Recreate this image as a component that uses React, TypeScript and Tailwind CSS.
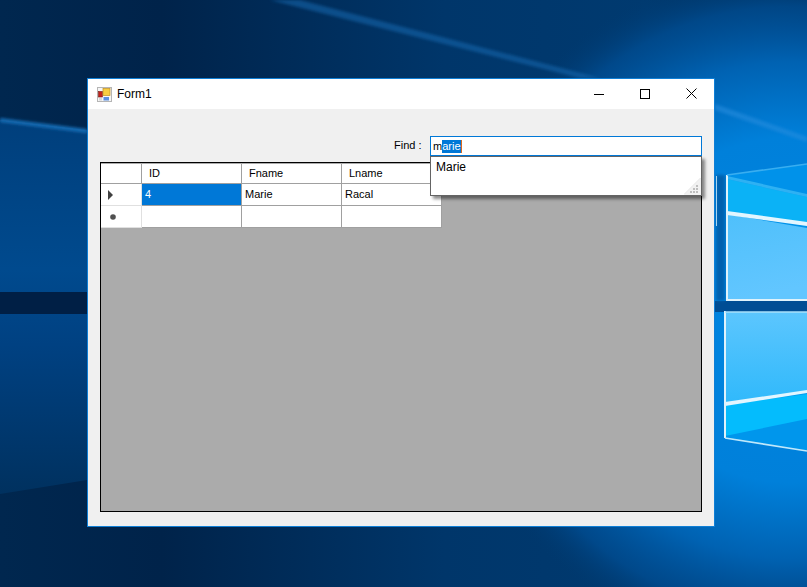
const ui = { fontFamily: '"Liberation Sans", Arial, sans-serif' };

function Wallpaper() {
  return (
    <svg className="absolute inset-0 w-full h-full" viewBox="0 0 807 587" preserveAspectRatio="none">
      <defs>
        <linearGradient id="base" x1="0" y1="0" x2="1" y2="0">
          <stop offset="0" stopColor="#00274f" />
          <stop offset="0.2" stopColor="#00234a" />
          <stop offset="0.55" stopColor="#00366a" />
          <stop offset="0.8" stopColor="#003a70" />
          <stop offset="1" stopColor="#00305e" />
        </linearGradient>
        <radialGradient id="glow" gradientUnits="userSpaceOnUse" cx="790" cy="310" r="345">
          <stop offset="0" stopColor="#0086e2" />
          <stop offset="0.5" stopColor="#0080da" />
          <stop offset="0.72" stopColor="#0062b2" />
          <stop offset="0.88" stopColor="#004f96" stopOpacity="0.7" />
          <stop offset="1" stopColor="#003a70" stopOpacity="0" />
        </radialGradient>
        <linearGradient id="leftBand" x1="0" y1="0" x2="0" y2="1">
          <stop offset="0" stopColor="#003f7c" />
          <stop offset="0.4" stopColor="#004a8e" />
          <stop offset="0.6" stopColor="#004182" />
          <stop offset="1" stopColor="#00315f" />
        </linearGradient>
        <linearGradient id="pane1" x1="0" y1="0" x2="0.2" y2="1">
          <stop offset="0" stopColor="#4fc0fb" />
          <stop offset="1" stopColor="#62c6ff" />
        </linearGradient>
        <linearGradient id="pane2" x1="0" y1="0" x2="0" y2="1">
          <stop offset="0" stopColor="#5cc6fe" />
          <stop offset="1" stopColor="#30b9fb" />
        </linearGradient>
        <filter id="blur"><feGaussianBlur stdDeviation="1.4" /></filter>
        <filter id="soft"><feGaussianBlur stdDeviation="0.6" /></filter>
      </defs>
      <rect width="807" height="587" fill="url(#base)" />
      <rect width="807" height="587" fill="url(#glow)" />
      <polygon points="0,120 87,130 87,480 0,494" fill="url(#leftBand)" />
      <polygon points="0,118 87,129 87,133 0,122" fill="#156cb4" filter="url(#blur)" />
      <polygon points="270,0 300,0 600,78 580,78" fill="#1469b0" opacity="0.55" filter="url(#blur)" />
      <polygon points="715,104 807,137 807,142 715,110" fill="#2a8fe0" opacity="0.55" filter="url(#blur)" />
      <rect x="0" y="292" width="87" height="22" fill="#001f45" />
      <rect x="715" y="301" width="92" height="11" fill="#004d94" />
      <rect x="716" y="175" width="9" height="126" fill="#0060ae" filter="url(#blur)" />
      <rect x="716" y="176" width="1" height="50" fill="#a8d4f0" />

      <polygon points="727,175 807,164 807,300 727,300" fill="#0092ea" />
      <polygon points="727,179 807,197 807,226 727,212" fill="#0bb2f6" />
      <polygon points="727,179 807,197 807,194 727,176" fill="#4cc6f8" opacity="0.6" />
      <polygon points="727,214 807,228 807,300 727,300" fill="url(#pane1)" />
      <polygon points="727,211 807,222 807,226 727,215" fill="#e2f6ff" filter="url(#soft)" />
      <path d="M727 300V175" stroke="#dff2fb" strokeWidth="2" fill="none" />
      <path d="M726 300H807" stroke="#dff2fb" strokeWidth="2" fill="none" />
      <path d="M727 175L807 164" stroke="#39aef0" strokeWidth="1.6" fill="none" />

      <polygon points="725,312 807,312 807,451 725,438" fill="#0096ec" />
      <polygon points="725,312 807,312 807,391 725,403" fill="url(#pane2)" />
      <polygon points="725,405 807,394 807,419 725,436" fill="#04bcfd" />
      <polygon points="725,402 807,390 807,393 725,406" fill="#e2f6ff" filter="url(#soft)" />
      <path d="M725 311V438" stroke="#dff2fb" strokeWidth="2" fill="none" />
      <path d="M725 312H807" stroke="#a8e0fb" strokeWidth="1.5" fill="none" />
      <path d="M725 438L807 451" stroke="#bfe8fb" strokeWidth="1.6" fill="none" />
    </svg>
  );
}

function AppIcon() {
  return (
    <svg width="15" height="15" viewBox="0 0 15 15" className="shrink-0">
      <rect x="0.5" y="0.5" width="14" height="14" fill="#f6f6f6" stroke="#b5b5b5" />
      <rect x="1.5" y="4.5" width="4" height="5.5" fill="#c4221a" stroke="#7a1a14" strokeWidth="0.6" />
      <rect x="6" y="1.5" width="7" height="7" fill="#f8cc40" stroke="#c09020" strokeWidth="0.7" />
      <rect x="6.5" y="10" width="5.5" height="3.5" fill="#5c8fe0" />
      <rect x="2" y="11" width="3" height="2.5" fill="#d8d8d8" />
    </svg>
  );
}

function TitleButtons() {
  return (
    <div className="flex items-center text-black -mt-px">
      <div className="w-[46px] h-[30px] flex items-center justify-center">
        <svg width="10" height="10" viewBox="0 0 10 10"><path d="M0 5.5H10" stroke="#000" strokeWidth="1" /></svg>
      </div>
      <div className="w-[46px] h-[30px] flex items-center justify-center">
        <svg width="10" height="10" viewBox="0 0 10 10"><rect x="0.5" y="0.5" width="9" height="9" fill="none" stroke="#000" /></svg>
      </div>
      <div className="w-[46px] h-[30px] flex items-center justify-center">
        <svg width="11" height="11" viewBox="0 0 11 11"><path d="M0.5 0.5L10.5 10.5M10.5 0.5L0.5 10.5" stroke="#000" strokeWidth="1" /></svg>
      </div>
    </div>
  );
}

const cols = ["ID", "Fname", "Lname"];

function Grid() {
  return (
    <div className="absolute left-[12px] top-[53px] w-[602px] h-[350px] border border-black bg-[#ababab] overflow-hidden">
      <div className="flex flex-col w-[342px] pt-px text-[11px] text-black leading-none">
        <div className="flex h-[20px]">
          <div className="w-[41px] h-full bg-white border-r border-b border-[#a0a0a0]" />
          {cols.map((c) => (
            <div key={c} className="w-[100px] h-full bg-white border-r border-b border-[#a0a0a0] pl-[7px] flex items-center">{c}</div>
          ))}
        </div>
        <div className="flex h-[22px]">
          <div className="w-[41px] h-full bg-white border-r border-b border-[#e0e0e0] flex items-center pl-[7px]">
            <svg width="5" height="10" viewBox="0 0 5 10"><path d="M0 0L5 5L0 10Z" fill="#404040" /></svg>
          </div>
          <div className="w-[100px] h-full bg-[#0078d7] text-white border-r border-b border-[#a0a0a0] pl-[3px] flex items-center">4</div>
          <div className="w-[100px] h-full bg-white border-r border-b border-[#a0a0a0] pl-[3px] flex items-center">Marie</div>
          <div className="w-[100px] h-full bg-white border-r border-b border-[#a0a0a0] pl-[3px] flex items-center">Racal</div>
        </div>
        <div className="flex h-[22px]">
          <div className="w-[41px] h-full bg-white border-r border-b border-[#e0e0e0] flex items-center pl-[9px]">
            <svg width="6" height="6" viewBox="0 0 6 6"><circle cx="3" cy="3" r="2.8" fill="#505050" /></svg>
          </div>
          {[0, 1, 2].map((i) => (
            <div key={i} className="w-[100px] h-full bg-white border-r border-b border-[#a0a0a0]" />
          ))}
        </div>
      </div>
    </div>
  );
}

function Grip() {
  return (
    <svg width="17" height="17" viewBox="0 0 17 17" className="absolute right-0 bottom-0">
      <path d="M0 17L17 0V17Z" fill="#f1f1f1" />
      <path d="M0 16.5L16.5 0" stroke="#e2e2e2" />
      <g fill="#bdbdbd">
        <rect x="12" y="7" width="2" height="2" />
        <rect x="9" y="10" width="2" height="2" />
        <rect x="12" y="10" width="2" height="2" />
        <rect x="6" y="13" width="2" height="2" />
        <rect x="9" y="13" width="2" height="2" />
        <rect x="12" y="13" width="2" height="2" />
      </g>
    </svg>
  );
}

export default function App() {
  return (
    <div className="relative w-[807px] h-[587px] overflow-hidden" style={ui}>
      <Wallpaper />
      <div className="absolute left-[87px] top-[78px] w-[628px] h-[449px] border border-[#0f7fd6] bg-[#f0f0f0] flex flex-col">
        <div className="h-[30px] bg-white flex items-center justify-between shrink-0">
          <div className="flex items-center gap-[5px] pl-[9px] text-[12px] text-black">
            <AppIcon />
            <span>Form1</span>
          </div>
          <TitleButtons />
        </div>
        <div className="relative flex-1">
          <Grid />
          <span className="absolute left-[306px] top-[29px] text-[11px] leading-[14px] text-black">Find :</span>
          <div className="absolute left-[342px] top-[27px] w-[272px] h-[20px] border border-[#0078d7] bg-white flex items-center pl-[2px] text-[11px] text-black leading-[13px]">
            <span>m</span>
            <span className="bg-[#0078d7] text-white h-[13px] border-r border-[#d8691f]">arie</span>
          </div>
          <div className="absolute left-[342px] top-[47px] w-[272px] h-[40px] border border-[#646464] bg-white shadow-[3px_3px_3px_rgba(0,0,0,0.45)] text-[12px] text-black pl-[5px] pt-[3px] leading-[14px]">
            Marie
            <Grip />
          </div>
        </div>
      </div>
    </div>
  );
}
